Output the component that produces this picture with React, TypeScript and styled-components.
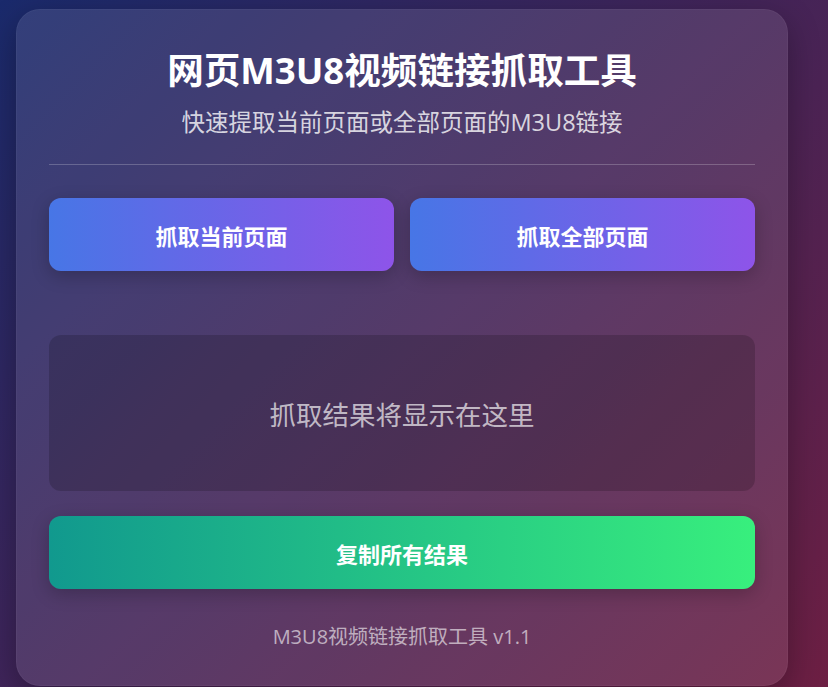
import React from "react";
import styled, { createGlobalStyle } from "styled-components";

const GlobalStyle = createGlobalStyle`
  html, body {
    margin: 0;
    padding: 0;
    min-height: 100%;
  }
  html {
    background: linear-gradient(135deg, #1a2a6c 0%, #432458 50%, #6d1f43 100%);
    background-attachment: fixed;
  }
  body {
    font-family: "Open Sans", "Noto Sans CJK SC", sans-serif;
    color: #fff;
    min-height: 100vh;
  }
`;

const Page = styled.div`
  padding: 9px 40px 2px 16px;
`;

const Card = styled.main`
  background: rgba(255, 255, 255, 0.1);
  border: 1px solid rgba(255, 255, 255, 0.04);
  border-radius: 24px;
  padding: 32px 32px 34px;
  box-shadow: 0 10px 32px rgba(0, 0, 0, 0.3);
  display: flex;
  flex-direction: column;
`;

const Header = styled.header`
  text-align: center;
  padding-top: 6px;
  padding-bottom: 26px;
  border-bottom: 1px solid rgba(255, 255, 255, 0.22);
`;

const Title = styled.h1`
  margin: 0;
  font-size: 36.6px;
  line-height: 44px;
  font-weight: 700;
  color: #fff;
`;

const Subtitle = styled.p`
  margin: 14px 0 0;
  font-size: 23.5px;
  line-height: 32px;
  color: rgba(255, 255, 255, 0.8);
`;

const ButtonRow = styled.div`
  display: grid;
  grid-template-columns: 1fr 1fr;
  gap: 16px;
  margin-top: 33px;
`;

const ActionButton = styled.button<{ $variant?: "primary" | "success" }>`
  height: 73px;
  border: none;
  border-radius: 12px;
  font-family: inherit;
  font-size: 22px;
  font-weight: 700;
  color: #fff;
  cursor: pointer;
  background: ${(p) =>
    p.$variant === "success"
      ? "linear-gradient(to right, #11998e, #38ef7d)"
      : "linear-gradient(to right, #4776e6, #8e54e9)"};
  box-shadow: 0 5px 18px rgba(0, 0, 0, 0.22);
`;

const CopyButton = styled(ActionButton)`
  margin-top: 25px;
`;

const ResultBox = styled.section`
  margin-top: 64px;
  height: 156px;
  border-radius: 12px;
  background: rgba(0, 0, 0, 0.17);
  display: flex;
  align-items: center;
  justify-content: center;
`;

const Placeholder = styled.p`
  margin: 0;
  font-size: 26.5px;
  color: rgba(255, 255, 255, 0.68);
`;

const Footer = styled.footer`
  margin-top: 34px;
  text-align: center;
  font-size: 20px;
  line-height: 28px;
  color: rgba(255, 255, 255, 0.6);
`;

export default function App() {
  return (
    <>
      <GlobalStyle />
      <Page>
        <Card>
          <Header>
            <Title>网页M3U8视频链接抓取工具</Title>
            <Subtitle>快速提取当前页面或全部页面的M3U8链接</Subtitle>
          </Header>
          <ButtonRow>
            <ActionButton>抓取当前页面</ActionButton>
            <ActionButton>抓取全部页面</ActionButton>
          </ButtonRow>
          <ResultBox>
            <Placeholder>抓取结果将显示在这里</Placeholder>
          </ResultBox>
          <CopyButton $variant="success">复制所有结果</CopyButton>
          <Footer>M3U8视频链接抓取工具 v1.1</Footer>
        </Card>
      </Page>
    </>
  );
}
